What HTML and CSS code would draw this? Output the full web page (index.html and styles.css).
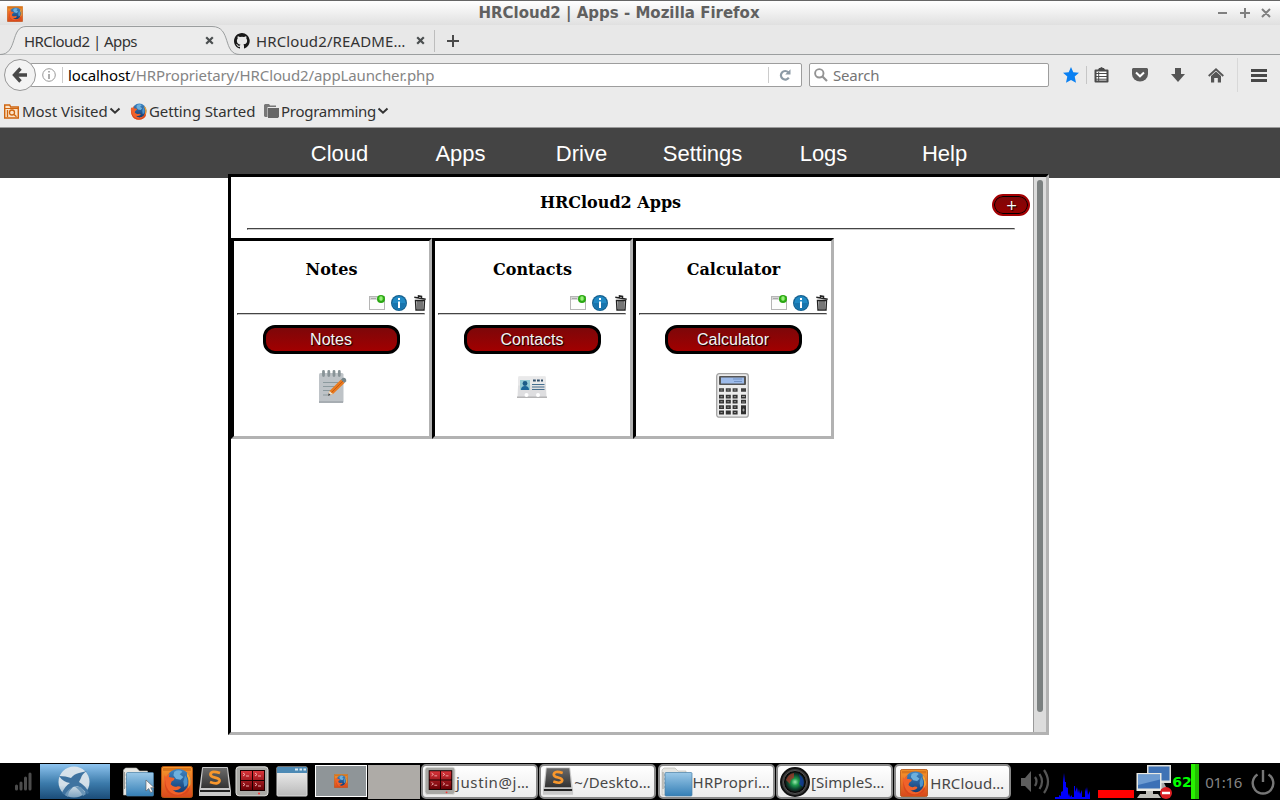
FILE: index.html
```html
<!DOCTYPE html>
<html lang="en">
<head>
<meta charset="utf-8">
<title>HRCloud2 | Apps</title>
<link rel="stylesheet" href="styles.css">
</head>
<body>
<svg class="defs" width="0" height="0" aria-hidden="true">
  <defs>
    <linearGradient id="gBlue" x1="0" y1="0" x2="0" y2="1"><stop offset="0" stop-color="#9cc9e8"/><stop offset="1" stop-color="#347fb6"/></linearGradient>
    <linearGradient id="gOrange" x1="0" y1="0" x2="0" y2="1"><stop offset="0" stop-color="#f79a2c"/><stop offset="1" stop-color="#d8481c"/></linearGradient>
    <linearGradient id="gGlobe" x1="0" y1="0" x2="0" y2="1"><stop offset="0" stop-color="#3f86c4"/><stop offset="1" stop-color="#12396f"/></linearGradient>
    <linearGradient id="gGrey" x1="0" y1="0" x2="0" y2="1"><stop offset="0" stop-color="#f4f4f4"/><stop offset="1" stop-color="#b9b9b9"/></linearGradient>
    <linearGradient id="gDark" x1="0" y1="0" x2="0" y2="1"><stop offset="0" stop-color="#6a6a6a"/><stop offset="1" stop-color="#333"/></linearGradient>
    <linearGradient id="gDisc" x1="0" y1="0" x2="0" y2="1"><stop offset="0" stop-color="#d9e4ec"/><stop offset=".6" stop-color="#d3dfe8"/><stop offset="1" stop-color="#7ea3c0"/></linearGradient>
    <linearGradient id="gRed" x1="0" y1="0" x2="0" y2="1"><stop offset="0" stop-color="#d8343a"/><stop offset="1" stop-color="#6a0005"/></linearGradient>
    <radialGradient id="gLens"><stop offset="0" stop-color="#9fe8b0"/><stop offset=".35" stop-color="#1d9a4c"/><stop offset=".7" stop-color="#0d4a33"/><stop offset="1" stop-color="#111"/></radialGradient>
    <symbol id="fox" viewBox="0 0 32 32">
      <circle cx="17.500" cy="14.500" r="13.500" fill="url(#gGlobe)"/>
      <path d="M13 4q5-3 9 0l-3 3 4 3-3 3-5-1-3-4z" fill="#6db0dd"/>
      <path d="M25 8q4 5 2 11l-3 2-1-6z" fill="#4c93cc"/>
      <path d="M2 8l2 2q1-3 4-4l-1 4 6 1q1 2-3 4l-1 3q3 4 8 2 4 0 3 2-4 4-9 2 5 5 12 2 6-4 6-13 4 10-3 15-8 6-17 1Q0 23 2 8z" fill="#f0622a"/>
      <path d="M3 13q0 9 6 14 8 5 15 0 5-4 5-10 3 8-4 12-8 5-17 0Q1 24 3 13z" fill="#d9481c"/>
      <path d="M27 5q5 5 4 13l-3 5q2-10-1-14z" fill="#f9a531"/>
    </symbol>
    <symbol id="foxSquare" viewBox="0 0 32 32">
      <rect x=".5" y=".5" width="31" height="31" rx="2" fill="url(#gOrange)" stroke="#b35412"/>
      <rect x="2" y="2" width="28" height="3" fill="#d9751d"/>
      <use href="#fox" x="1" y="2" width="30" height="29"/>
    </symbol>
    <symbol id="terms" viewBox="0 0 34 32">
      <rect x="1" y=".8" width="32" height="29" rx="3" fill="#a9a9a5" stroke="#e1e1de"/>
      <rect x="5" y="4" width="25" height="21" fill="#190000"/>
      <path d="M6 5h11v9H6zM18 5h11v9H18zM6 15h11v9H6zM18 15h11v9H18z" fill="url(#gRed)"/>
      <path d="M8 7l2 1.500-2 1.500M11 10h3M20 7l2 1.500-2 1.500M23 10h3M8 17l2 1.500-2 1.500M11 20h3M20 17l2 1.500-2 1.500M23 20h3" fill="none" stroke="#f6baba" stroke-width=".9"/>
      <circle cx="24" cy="27.500" r="1" fill="#f33"/>
    </symbol>
    <symbol id="subl" viewBox="0 0 34 32">
      <path d="M4 2q0-1 1-1h24q1 0 1 1l3 23v5H1v-5z" fill="#c9c9c9"/>
      <path d="M5 2h24l2 20H3z" fill="url(#gDark)"/>
      <path d="M2 24h30v2H2z" fill="#222"/>
      <path d="M22 7q-9-3-9.500 1.500c0 4.500 9.500 2 9 6.500Q20.500 19 12 16" fill="none" stroke="#f8972c" stroke-width="2.800"/>
    </symbol>
    <symbol id="folder" viewBox="0 0 32 30">
      <path d="M1 3l2-2h11l3 3h8v24H1z" fill="#e6e6e2" stroke="#b5b5b0" stroke-width=".6"/>
      <path d="M2 22V5M3 8h1M3 12h1M3 16h1M3 20h1" stroke="#9a9a96"/>
      <rect x="4" y="5.500" width="27" height="23.500" rx="1" fill="url(#gBlue)" stroke="#477fa8" stroke-width=".7"/>
    </symbol>
    <symbol id="newWin" viewBox="0 0 16 16">
      <rect x=".5" y="1.500" width="15" height="13" fill="#fdfdfd" stroke="#b5b5b5"/>
      <path d="M1 2h14v3H1z" fill="#d6d6d6"/><path d="M2 3.500h5" stroke="#aaa"/>
      <circle cx="12" cy="4" r="4" fill="#2aa713"/><circle cx="12" cy="3.500" r="2.300" fill="#6cdf4a"/><path d="M12 1.500v4" stroke="#c7f9b5"/>
    </symbol>
    <symbol id="info" viewBox="0 0 16 16">
      <circle cx="8" cy="8" r="8" fill="#15608f"/><circle cx="8" cy="8" r="6.800" fill="#2089c4"/><path d="M1.500 8a6.500 6.500 0 0 0 13 0z" fill="#1874ad"/>
      <path d="M7 3h2v2H7zM7 6.500h2V13H7z" fill="#fff"/>
    </symbol>
    <symbol id="trash" viewBox="0 0 12 16">
      <path d="M1.500 5.500h9l-.5 9.500H2z" fill="#ddd" stroke="#222" stroke-width="1.400"/><path d="M4 6v8M6 6v8M8 6v8" stroke="#222" stroke-width="1.100"/>
      <path d="M.3 2.300l11.400 2M4.500 2.800V.9l3 .5v1.700" fill="none" stroke="#222" stroke-width="1.500"/>
    </symbol>
    <symbol id="chev" viewBox="0 0 12 8"><path d="M1.500 1.500L6 5.700l4.500-4.200" fill="none" stroke="#333" stroke-width="2"/></symbol>
    <symbol id="cross" viewBox="0 0 9 9"><path d="M1.200 1.200l6.600 6.600M7.800 1.200L1.200 7.800" stroke="#4b4f50" stroke-width="2.200"/></symbol>
  </defs>
</svg>

<header class="browser">
  <div class="titlebar">
    <svg class="title-icon" width="16" height="16"><use href="#foxSquare"/></svg>
    <span class="window-title">HRCloud2 | Apps - Mozilla Firefox</span>
    <svg class="window-buttons" width="56" height="12" viewBox="0 0 56 12"><path d="M1 6h9M23 6h10M28 1v10M45 2l8 8M53 2l-8 8" fill="none" stroke="#808080" stroke-width="2"/></svg>
  </div>

  <div class="tabs">
    <div class="tab active">
      <svg class="tab-shape" width="240" height="30" viewBox="0 0 240 30"><path d="M0 29.500C18 29.500 10 1.500 26 1.500H212C232 1.500 222 29.500 240 29.500" fill="#ececec" stroke="#9b9e9f"/></svg>
      <span class="ui tab-label first">HRCloud2 | Apps</span>
      <svg class="close" width="9" height="9"><use href="#cross"/></svg>
    </div>
    <div class="tab second">
      <svg width="16" height="16" viewBox="0 0 16 16"><path fill="#181818" d="M8 0C3.600 0 0 3.600 0 8c0 3.500 2.300 6.500 5.500 7.600.4.100.5-.2.500-.4v-1.400c-2.200.5-2.700-1-2.700-1-.4-.9-.9-1.200-.9-1.200-.7-.5.100-.5.100-.5.800.1 1.200.8 1.200.8.700 1.300 1.900.9 2.300.7.100-.5.300-.9.500-1.100-1.800-.2-3.600-.9-3.600-4 0-.9.300-1.600.8-2.100-.1-.2-.4-1 .1-2.100 0 0 .7-.2 2.200.8a7.600 7.600 0 0 1 4 0c1.500-1 2.200-.8 2.200-.8.400 1.100.2 1.900.1 2.100.5.600.8 1.300.8 2.100 0 3.100-1.900 3.700-3.700 3.900.3.300.6.800.6 1.500v2.200c0 .2.100.5.500.4A8 8 0 0 0 8 0z"/></svg>
      <span class="ui tab-label second-label">HRCloud2/README…</span>
      <svg width="9" height="9"><use href="#cross"/></svg>
    </div>
    <svg class="new-tab" width="12" height="12" viewBox="0 0 12 12"><path d="M6 0v12M0 6h12" stroke="#4a4a4a" stroke-width="2"/></svg>
  </div>

  <div class="toolbar">
    <div class="back"><svg width="16" height="16" viewBox="0 0 16 16"><path d="M8.500 1.500L2.500 8l6 6.500M3 8h12" fill="none" stroke="#484848" stroke-width="3.400"/></svg></div>
    <div class="address">
      <svg width="14" height="14" viewBox="0 0 14 14"><circle cx="7" cy="7" r="6.300" fill="none" stroke="#999"/><path d="M6.200 3h1.600v1.600H6.200zM6.200 6h1.600v5H6.200z" fill="#999"/></svg>
      <span class="ui url"><b>localhost</b>/HRProprietary/HRCloud2/appLauncher.php</span>
      <svg class="reload" width="12" height="12" viewBox="0 0 12 12"><path d="M9.300 3.300A4.300 4.300 0 1 0 9.800 8.700" fill="none" stroke="#8c9aa5" stroke-width="2.200"/><path d="M11.500.3v5.200H6.200z" fill="#8c9aa5"/></svg>
    </div>
    <div class="search">
      <svg width="14" height="14" viewBox="0 0 14 14"><circle cx="5.300" cy="5.300" r="4.200" fill="none" stroke="#939393" stroke-width="1.900"/><path d="M8.500 8.500l4.500 4.500" stroke="#939393" stroke-width="2.200"/></svg>
      <span class="ui search-text">Search</span>
    </div>
    <div class="tools">
      <svg width="16" height="16" viewBox="0 0 16 16"><path d="M8 0l2.300 5.200 5.700.6-4.300 3.800L13 15.700 8 12.900 3 15.700l1.300-6.100L0 5.800l5.700-.6z" fill="#0a80f2"/></svg>
      <i class="tool-divider"></i>
      <svg class="clip" width="15" height="16" viewBox="0 0 15 16"><path d="M1.500 3.500h12v11h-12z" fill="#fff" stroke="#4a4a4a" stroke-width="2" stroke-linejoin="round"/><path d="M4 3l1-2h1l1.500-1L9 1h1l1 2z" fill="#4a4a4a"/><path d="M2 6.500h11M2 9.500h11M2 12.200h11M4.700 5v9" stroke="#4a4a4a" stroke-width="1"/></svg>
      <svg class="pocket" width="16" height="14" viewBox="0 0 16 14"><path d="M1 0h14l1 1v5a8 7.500 0 0 1-16 0V1z" fill="#5b5b5b"/><path d="M4 4.500l4 3.800 4-3.800" fill="none" stroke="#fff" stroke-width="2"/></svg>
      <svg class="down" width="14" height="14" viewBox="0 0 14 14"><path d="M4 0h6v6h4l-7 8-7-8h4z" fill="#555"/></svg>
      <svg class="home" width="16" height="15" viewBox="0 0 16 15"><path d="M.7 8L8 1.300 15.300 8" fill="none" stroke="#555" stroke-width="1.800"/><path d="M3 8l5-4.500L13 8v6.500H9.800V10H6.200v4.500H3z" fill="#555"/></svg>
      <i class="tool-divider tall"></i>
      <svg width="16" height="13" viewBox="0 0 16 13"><path d="M0 1.500h16M0 6.500h16M0 11.500h16" stroke="#484848" stroke-width="3"/></svg>
    </div>
  </div>

  <div class="bookmarks">
    <svg width="15" height="15" viewBox="0 0 15 15"><path d="M.7 14V1h5l1 2h7.600v11z" fill="#fbe3c7" stroke="#cf6510" stroke-width="1.400"/><path d="M1 4.500h13" stroke="#cf6510"/><circle cx="8" cy="8.500" r="2.500" fill="none" stroke="#cf6510" stroke-width="1.300"/><path d="M10 10.500l2.500 2.300M3.500 6v7" stroke="#cf6510" stroke-width="1.300"/></svg>
    <span class="ui most">Most Visited</span>
    <svg class="arrow" width="12" height="8"><use href="#chev"/></svg>
    <svg class="fox-mark" width="17" height="17"><use href="#fox"/></svg>
    <span class="ui getting">Getting Started</span>
    <svg width="15" height="14" viewBox="0 0 15 14"><path d="M0 1l1-1h4l1.200 1.500H12V3H3.500v10H1L0 12z" fill="#777"/><path d="M4 4h11v8.500L14 14H4z" fill="#666"/></svg>
    <span class="ui programming">Programming</span>
    <svg width="12" height="8"><use href="#chev"/></svg>
  </div>
</header>

<nav class="site-nav">
  <a>Cloud</a><a>Apps</a><a>Drive</a><a>Settings</a><a>Logs</a><a>Help</a>
</nav>

<main class="frame">
  <section class="content">
    <div class="heading"><h1>HRCloud2 Apps</h1><button class="add">+</button></div>
    <hr class="rule">
    <div class="cards">
      <article class="card">
        <h2>Notes</h2>
        <div class="actions"><svg width="16" height="16"><use href="#newWin"/></svg><svg width="16" height="16"><use href="#info"/></svg><svg width="12" height="16"><use href="#trash"/></svg></div>
        <hr>
        <button class="launch">Notes</button>
        <svg class="notes-icon" width="28" height="33" viewBox="0 0 28 33">
          <rect x="0" y="3" width="24.500" height="30" rx="1.500" fill="#bec3c7"/><path d="M0 31h24v2H0z" fill="#a7adb2"/>
          <path d="M4.500 1.500v4M9.800 1.500v4M15 1.500v4M20.300 1.500v4" stroke="#889397" stroke-width="2.800" stroke-linecap="round"/>
          <path d="M4 12.500h15M4 16.500h12M4 20.500h9M4 25h6" stroke="#8c9a9e"/>
          <path d="M9 25.500l1.500-4.500L22 9.500l3.500 3.500L14 24z" fill="#e97a1f"/><path d="M12 23L24 11" stroke="#c75c10"/><path d="M22 9.500L24 7.800q3.500-.5 3.300 3.500L25.500 13z" fill="#748489"/><path d="M9 25.500l1.500-4.500 3.500 3z" fill="#eee2c8"/><path d="M9 25.800l.8-2.600 1.800 1.700z" fill="#26384b"/>
        </svg>
      </article>
      <article class="card">
        <h2>Contacts</h2>
        <div class="actions"><svg width="16" height="16"><use href="#newWin"/></svg><svg width="16" height="16"><use href="#info"/></svg><svg width="12" height="16"><use href="#trash"/></svg></div>
        <hr>
        <button class="launch">Contacts</button>
        <svg class="contacts-icon" width="30" height="23" viewBox="0 0 30 23">
          <path d="M1.500.5h27l1 20.500H.5z" fill="#dedee0"/><path d="M1.500.5h27v9H1z" fill="#e9e9ea"/><path d="M0 20.500h30v1.500H0z" fill="#b5b5b6"/>
          <rect x="3" y="4" width="10" height="10" fill="#93cbd3"/><circle cx="8" cy="7.500" r="2.400" fill="#1c5d88"/><path d="M4 14q0-4 4-4t4 4z" fill="#1c6798"/>
          <path d="M16 4.500h2.800M20 4.500h2.800M24 4.500h2" stroke="#304f6b" stroke-width="2"/><path d="M15 8.500h12.500M15 11h12.500M15 13.500h12.500" stroke="#466f8f" stroke-width="1.100"/>
          <circle cx="9.500" cy="19" r="2" fill="#fff"/><circle cx="21" cy="19" r="2" fill="#fff"/>
        </svg>
      </article>
      <article class="card">
        <h2>Calculator</h2>
        <div class="actions"><svg width="16" height="16"><use href="#newWin"/></svg><svg width="16" height="16"><use href="#info"/></svg><svg width="12" height="16"><use href="#trash"/></svg></div>
        <hr>
        <button class="launch">Calculator</button>
        <svg class="calc-icon" width="33" height="45" viewBox="0 0 33 45">
          <rect x=".7" y=".7" width="31.600" height="43.500" rx="2.500" fill="#ececec" stroke="#a3a3a3" stroke-width="1.300"/>
          <rect x="3" y="3" width="27" height="9" rx="1" fill="#555"/><rect x="5" y="4.500" width="23" height="6" fill="#9dbbea"/><path d="M17 6h9M18 8.500h8" stroke="#7191c4"/>
          <path d="M3 17h19M25 17h5" stroke="#3f3f3f" stroke-width="3.400" stroke-dasharray="5 1.800"/>
          <path d="M3 23.700h19M3 28.700h19M3 34.200h19M3 39.500h19" stroke="#343434" stroke-width="3.800" stroke-dasharray="5 1.800"/>
          <path d="M25 23.700h5M25 28.700h5" stroke="#343434" stroke-width="3.800"/><path d="M25 32.300h5v9h-5z" fill="#303030"/><path d="M26 37h3M27.500 35.500v3M26 29h3M26 23.500h3" stroke="#ccc" stroke-width=".6"/>
          <path d="M4.500 17h2M11.300 17h2M18 17h2M4.500 23.700h2M11.300 23.700h2M18 23.700h2M4.500 28.700h2M11.300 28.700h2M18 28.700h2M4.500 34.200h2M11.300 34.200h2M18 34.200h2M4.500 39.500h2M18 39.500h2" stroke="#999" stroke-width=".9"/>
        </svg>
      </article>
    </div>
  </section>
  <div class="scroll"><div class="thumb"></div></div>
</main>

<footer class="taskbar">
  <svg class="signal" width="18" height="20" viewBox="0 0 18 20"><path d="M2.500 14v3M7 11v6M11.500 6v11M16 2v15" stroke="#4c4c4c" stroke-width="3" stroke-linecap="round"/></svg>
  <div class="start"><svg width="32" height="32" viewBox="0 0 32 32"><circle cx="16" cy="16" r="15.500" fill="url(#gDisc)"/><path d="M1 10q7 0 12 2 3-4 8-5l8-2q-5 3-6 7l-2 4q7 4 10 11l-2 1q-4-6-10-8l-4 1q-5 4-7 9l-4-3q3-7 8-10Q5 16 1 10z" fill="#3f73a0"/><path d="M15 21q-5 4-5 10l-3-2q2-5 8-8zM16 20l7 1 5 7-3 2q-3-6-9-10z" fill="#6b96b8"/></svg></div>
  <div class="launchers">
    <svg width="34" height="30" viewBox="0 0 34 30"><use href="#folder" width="33" height="30"/><path d="M24 13v11l2.700-2.500 2 4 2-1-2-3.800h3.500z" fill="#f6f6f6" stroke="#555" stroke-width=".6"/></svg>
    <svg width="32" height="32"><use href="#foxSquare"/></svg>
    <svg width="34" height="32"><use href="#subl"/></svg>
    <svg class="terminator" width="34" height="32"><use href="#terms"/></svg>
    <svg width="32" height="31" viewBox="0 0 32 31"><rect x="1" y="1" width="30" height="29" rx="1" fill="url(#gGrey)" stroke="#ddd"/><path d="M1 1h30v6H1z" fill="#4d8ab5"/><path d="M19 3.500h3M23.500 3.500h2.500M27.500 3.500h2.500" stroke="#dcebf5" stroke-width="2"/></svg>
  </div>
  <div class="pager"><div class="desk current"><svg width="14" height="14"><use href="#foxSquare"/></svg></div><div class="desk"></div></div>
  <div class="tasks">
    <div class="task"><svg width="32" height="31"><use href="#terms"/></svg><span class="ui t1">justin@j…</span></div>
    <div class="task"><svg width="32" height="31"><use href="#subl"/></svg><span class="ui t2">~/Deskto…</span></div>
    <div class="task"><svg width="32" height="30"><use href="#folder"/></svg><span class="ui t3">HRPropri…</span></div>
    <div class="task lens"><svg width="30" height="30" viewBox="0 0 30 30"><circle cx="15" cy="15" r="14" fill="#3b3b3b" stroke="#111" stroke-width="2"/><circle cx="15" cy="15" r="11.500" fill="#050505" stroke="#555"/><circle cx="15" cy="15" r="10" fill="url(#gLens)"/><path d="M6 13q2-6 8-7v5q-4 1-4 6z" fill="#a6382a" opacity=".75"/><path d="M19 7q7 5 4 13l-4-3q2-4 0-10z" fill="#133a96" opacity=".85"/></svg><span class="ui t4">[SimpleS…</span></div>
    <div class="task running"><svg width="28" height="28"><use href="#foxSquare"/></svg><span class="ui t5">HRCloud…</span></div>
  </div>
  <div class="tray">
    <svg class="volume" width="31" height="27" viewBox="0 0 31 27"><path d="M1 10h4l6-7v21l-6-6H1z" fill="#5e5e5e"/><path d="M15 9q3 4 0 9M19.500 6q5 7.500 0 15M24 2q8 11.500 0 23" fill="none" stroke="#555" stroke-width="2.200"/></svg>
    <svg class="cpu" width="36" height="27" viewBox="0 0 36 27"><path d="M0 27v-2h4v-2l2 1v-4l2-1V10l1-9 1 9h1v5l2 1v8l1-3 1 4 2-2v2h2V14h1v6l2-5 1 6 1-4 1 5 2-4v7h3v-9l1 4 1-5 1 8 2-4v10z" fill="#0000fd"/></svg>
    <div class="mem"></div>
    <svg class="network" width="36" height="35" viewBox="0 0 36 35"><rect x="11" y="1" width="24" height="18" fill="#deded9"/><rect x="12.500" y="2.500" width="21" height="14" fill="#3f72b5"/><path d="M23 19h5l3 6h-9z" fill="#aaa"/><rect x=".5" y="9" width="25" height="18" fill="#e9e9e4"/><rect x="2" y="10.500" width="22" height="14" fill="#3b70b6"/><path d="M2 10.500h22v5L2 21z" fill="#6d9bd1"/><path d="M10 27h7v3h5l3 4H1l3-4h6z" fill="#bdbdb8"/><circle cx="30" cy="29" r="6" fill="#dd1e22"/><path d="M26 29h8" stroke="#fff" stroke-width="2.500"/></svg>
    <span class="battery">62</span><i class="battery-bar"></i>
    <span class="ui clock">01:16</span>
    <svg class="power" width="24" height="26" viewBox="0 0 24 26"><path d="M6.500 5.500A10.300 10.300 0 1 0 17.500 5.500" fill="none" stroke="#777" stroke-width="2.400"/><path d="M12 1v12" stroke="#777" stroke-width="2.400"/></svg>
  </div>
</footer>
</body>
</html>
```
FILE: styles.css
```css
* { box-sizing: border-box; }
html, body { margin: 0; height: 100%; }
body { width: 1280px; height: 800px; overflow: hidden; background: #fff; display: flex; flex-direction: column; font-family: "DejaVu Serif", serif; }
svg { display: block; flex: none; }
.defs { position: absolute; }
.ui { font-family: "Noto Sans", sans-serif; font-size: 15px; line-height: 20px; color: #333; white-space: nowrap; flex: none; display: block; }

.browser { height: 128px; flex: none; background: #ebebeb; border-bottom: 1px solid #9a9a9a; }
.titlebar { height: 25px; border-top: 1px solid #666; background: linear-gradient(#fff, #e0e0e0); display: flex; align-items: center; padding: 0 7px 1px 7px; }
.window-title { flex: 1; text-align: center; padding-right: 25px; font: bold 15px/20px "DejaVu Sans", sans-serif; color: #606060; }
.title-icon { margin-top: 2px; }
.window-buttons { margin-left: -23px; }

.tabs { height: 30px; background: #e8e8e8; border-bottom: 1px solid #9b9e9f; display: flex; align-items: center; }
.tab { display: flex; align-items: center; height: 30px; }
.tab.active { position: relative; width: 234px; padding-left: 24px; }
.tab-shape { position: absolute; left: 0; top: 0; }
.tab.active .tab-label, .close { position: relative; }
.close { margin-top: 2px; }
.tab-label { margin-top: 2px; }
.first { width: 181px; letter-spacing: -.55px; }
.second { width: 201px; height: 22px; border-right: 1px solid #bdbdbd; margin-top: 2px; position: relative; }
.second-label { width: 160px; margin: 0 0 0 6px; letter-spacing: .12px; }
.new-tab { margin-left: 12px; margin-top: 2px; }

.toolbar { height: 40px; display: flex; align-items: center; padding-left: 4px; }
.back { width: 32px; height: 32px; border: 1px solid #979797; border-radius: 50%; background: #f3f3f3; display: flex; align-items: center; justify-content: center; z-index: 1; flex: none; }
.address { width: 772px; height: 24px; margin-left: -6px; border: 1px solid #9d9d9d; border-radius: 2px; background: #fff; display: flex; align-items: center; padding-left: 11px; flex: none; }
.url { margin-left: 6px; padding-left: 5px; border: solid #ccc; border-width: 0 1px; width: 707px; line-height: 16px; color: #858585; letter-spacing: -.12px; }
.url b { font-weight: 400; color: #000; }
.reload { margin-left: 10px; }
.search { width: 240px; height: 24px; margin-left: 7px; border: 1px solid #9d9d9d; border-radius: 2px; background: #fff; display: flex; align-items: center; gap: 5px; padding-left: 4px; flex: none; }
.search-text { color: #757575; letter-spacing: -.2px; }
.tools { display: flex; align-items: center; margin-left: 14px; }
.tool-divider { width: 1px; height: 18px; margin: 0 8px 0 7px; background: #c6c6c6; }
.tool-divider.tall { height: 34px; margin: 0 13px; background: #d8d8d8; }
.clip { margin: -1px 1px 0 -1px; }
.pocket { margin-left: 22px; }
.down { margin-left: 23px; }
.home { margin-left: 23px; }

.bookmarks { height: 32px; display: flex; align-items: center; padding-left: 4px; }
.most { margin-left: 3px; width: 87px; letter-spacing: -.05px; }
.arrow { margin-right: 9px; }
.getting { margin-left: 2px; width: 115px; letter-spacing: -.1px; }
.programming { margin-left: 2px; width: 96px; letter-spacing: -.28px; }

.site-nav { height: 50px; flex: none; background: #444; display: flex; padding-left: 279px; }
.site-nav a { width: 121px; text-align: center; color: #fff; font: 22px/51px "Liberation Sans", Arial, sans-serif; }

.frame { width: 821px; height: 561px; flex: none; margin: -4px 0 0 228px; background: #fff; border: 3px solid; border-color: #000 #b2b2b2 #b2b2b2 #000; display: flex; position: relative; }
.content { width: 802px; }
.heading { height: 51px; display: flex; justify-content: flex-end; padding: 17px 3px 0 0; }
h1, h2 { font: bold 16px/19px "DejaVu Serif", serif; margin: 0; color: #000; text-align: center; }
.heading h1 { flex: 1; margin: -1px 2px 0 0; }
.add { width: 38px; height: 22px; padding: 0 0 0 1px; border: 2px solid #a30003; border-radius: 11px; background: linear-gradient(#7d0709, #960000); box-shadow: inset 0 0 0 1px #000; color: #fff; font: 14px/19px "DejaVu Sans", sans-serif; text-shadow: 1px 1px 1px #000; }
hr { border: 1px solid; border-color: #444 #ccc #ccc #444; height: 2px; margin: 0; }
.rule { margin: 0 18px 0 16px; }
.cards { display: flex; margin-top: 8px; }
.card { width: 201px; height: 201px; border: 3px solid; border-color: #000 #b2b2b2 #b2b2b2 #000; display: flex; flex-direction: column; align-items: center; padding-top: 19px; }
.card h2 { height: 35px; }
.actions { align-self: flex-end; display: flex; gap: 6px; margin-right: 3px; }
.actions svg:last-child { margin-left: 1px; }
.card hr { width: 188px; margin: 2px 2px 10px 0; }
.launch { width: 137px; height: 29px; margin-right: 1px; padding: 0; border: 3px solid #000; border-radius: 12px; background: linear-gradient(#7d0709, #a20000); color: #f4f4f4; font: 16px/22px "Liberation Sans", Arial, sans-serif; text-shadow: 1px 1px 1px #000; flex: none; }
.notes-icon { margin: 16px 0 0 2px; }
.contacts-icon { margin: 22px 0 0 -2px; }
.calc-icon { margin: 19px 0 0 -3px; }
.scroll { width: 13px; border-left: 1px solid #999; background: #dcdcdc; padding: 3px 3px 0; }
.thumb { width: 6px; height: 532px; border-radius: 3px; background: #7b8080; }

.taskbar { margin-top: auto; height: 37px; flex: none; background: #000; display: flex; align-items: center; }
.signal { margin-left: 14px; }
.start { width: 70px; height: 35px; margin-left: 8px; padding-right: 2px; background: linear-gradient(#8ec4ef, #3c7bab 55%, #1b4c78); display: flex; justify-content: center; align-items: center; }
.launchers { display: flex; align-items: center; gap: 5px; width: 193px; margin-left: 12px; }
.terminator { margin: 0 2px 0 -2px; }
.pager { display: flex; height: 34px; gap: 1px; }
.desk { width: 52px; background: #aeaba7; display: flex; justify-content: center; align-items: center; }
.current { background: #8f9598; border: 1px solid #fff; margin-bottom: 2px; }
.tasks { display: flex; gap: 1.300px; margin-left: 1px; }
.task { width: 117px; height: 35px; border: 2px solid #888; border-radius: 5px; background: linear-gradient(#fff, #ececec); display: flex; align-items: center; padding-left: 1px; overflow: hidden; }
.task .ui { color: #474747; }
.t1 { letter-spacing: .6px; }
.t2 { letter-spacing: .15px; }
.t3 { letter-spacing: .2px; }
.task.lens { padding-left: 2px; }
.t4 { padding-left: 1px; letter-spacing: .1px; }
.task.running { padding-left: 4px; }
.running svg { margin-top: 2px; }
.task.running .ui { margin: 2px 0 0 2px; letter-spacing: .1px; }
.tray { display: flex; align-items: center; margin-left: 9px; }
.cpu { margin: 7px 0 0 4px; }
.mem { width: 36px; height: 8px; margin: 25px 0 0 7px; background: #f00; }
.network { margin-left: 2px; }
.battery { font: bold 14px/18px "DejaVu Sans", sans-serif; color: #0f0; width: 19px; }
.battery-bar { width: 8px; height: 35px; background: linear-gradient(90deg, #28f200 50%, #21bd00 50%); }
.clock { color: #858585; margin-left: 6px; width: 37px; letter-spacing: -.3px; }
.power { margin-left: 9px; }
```
